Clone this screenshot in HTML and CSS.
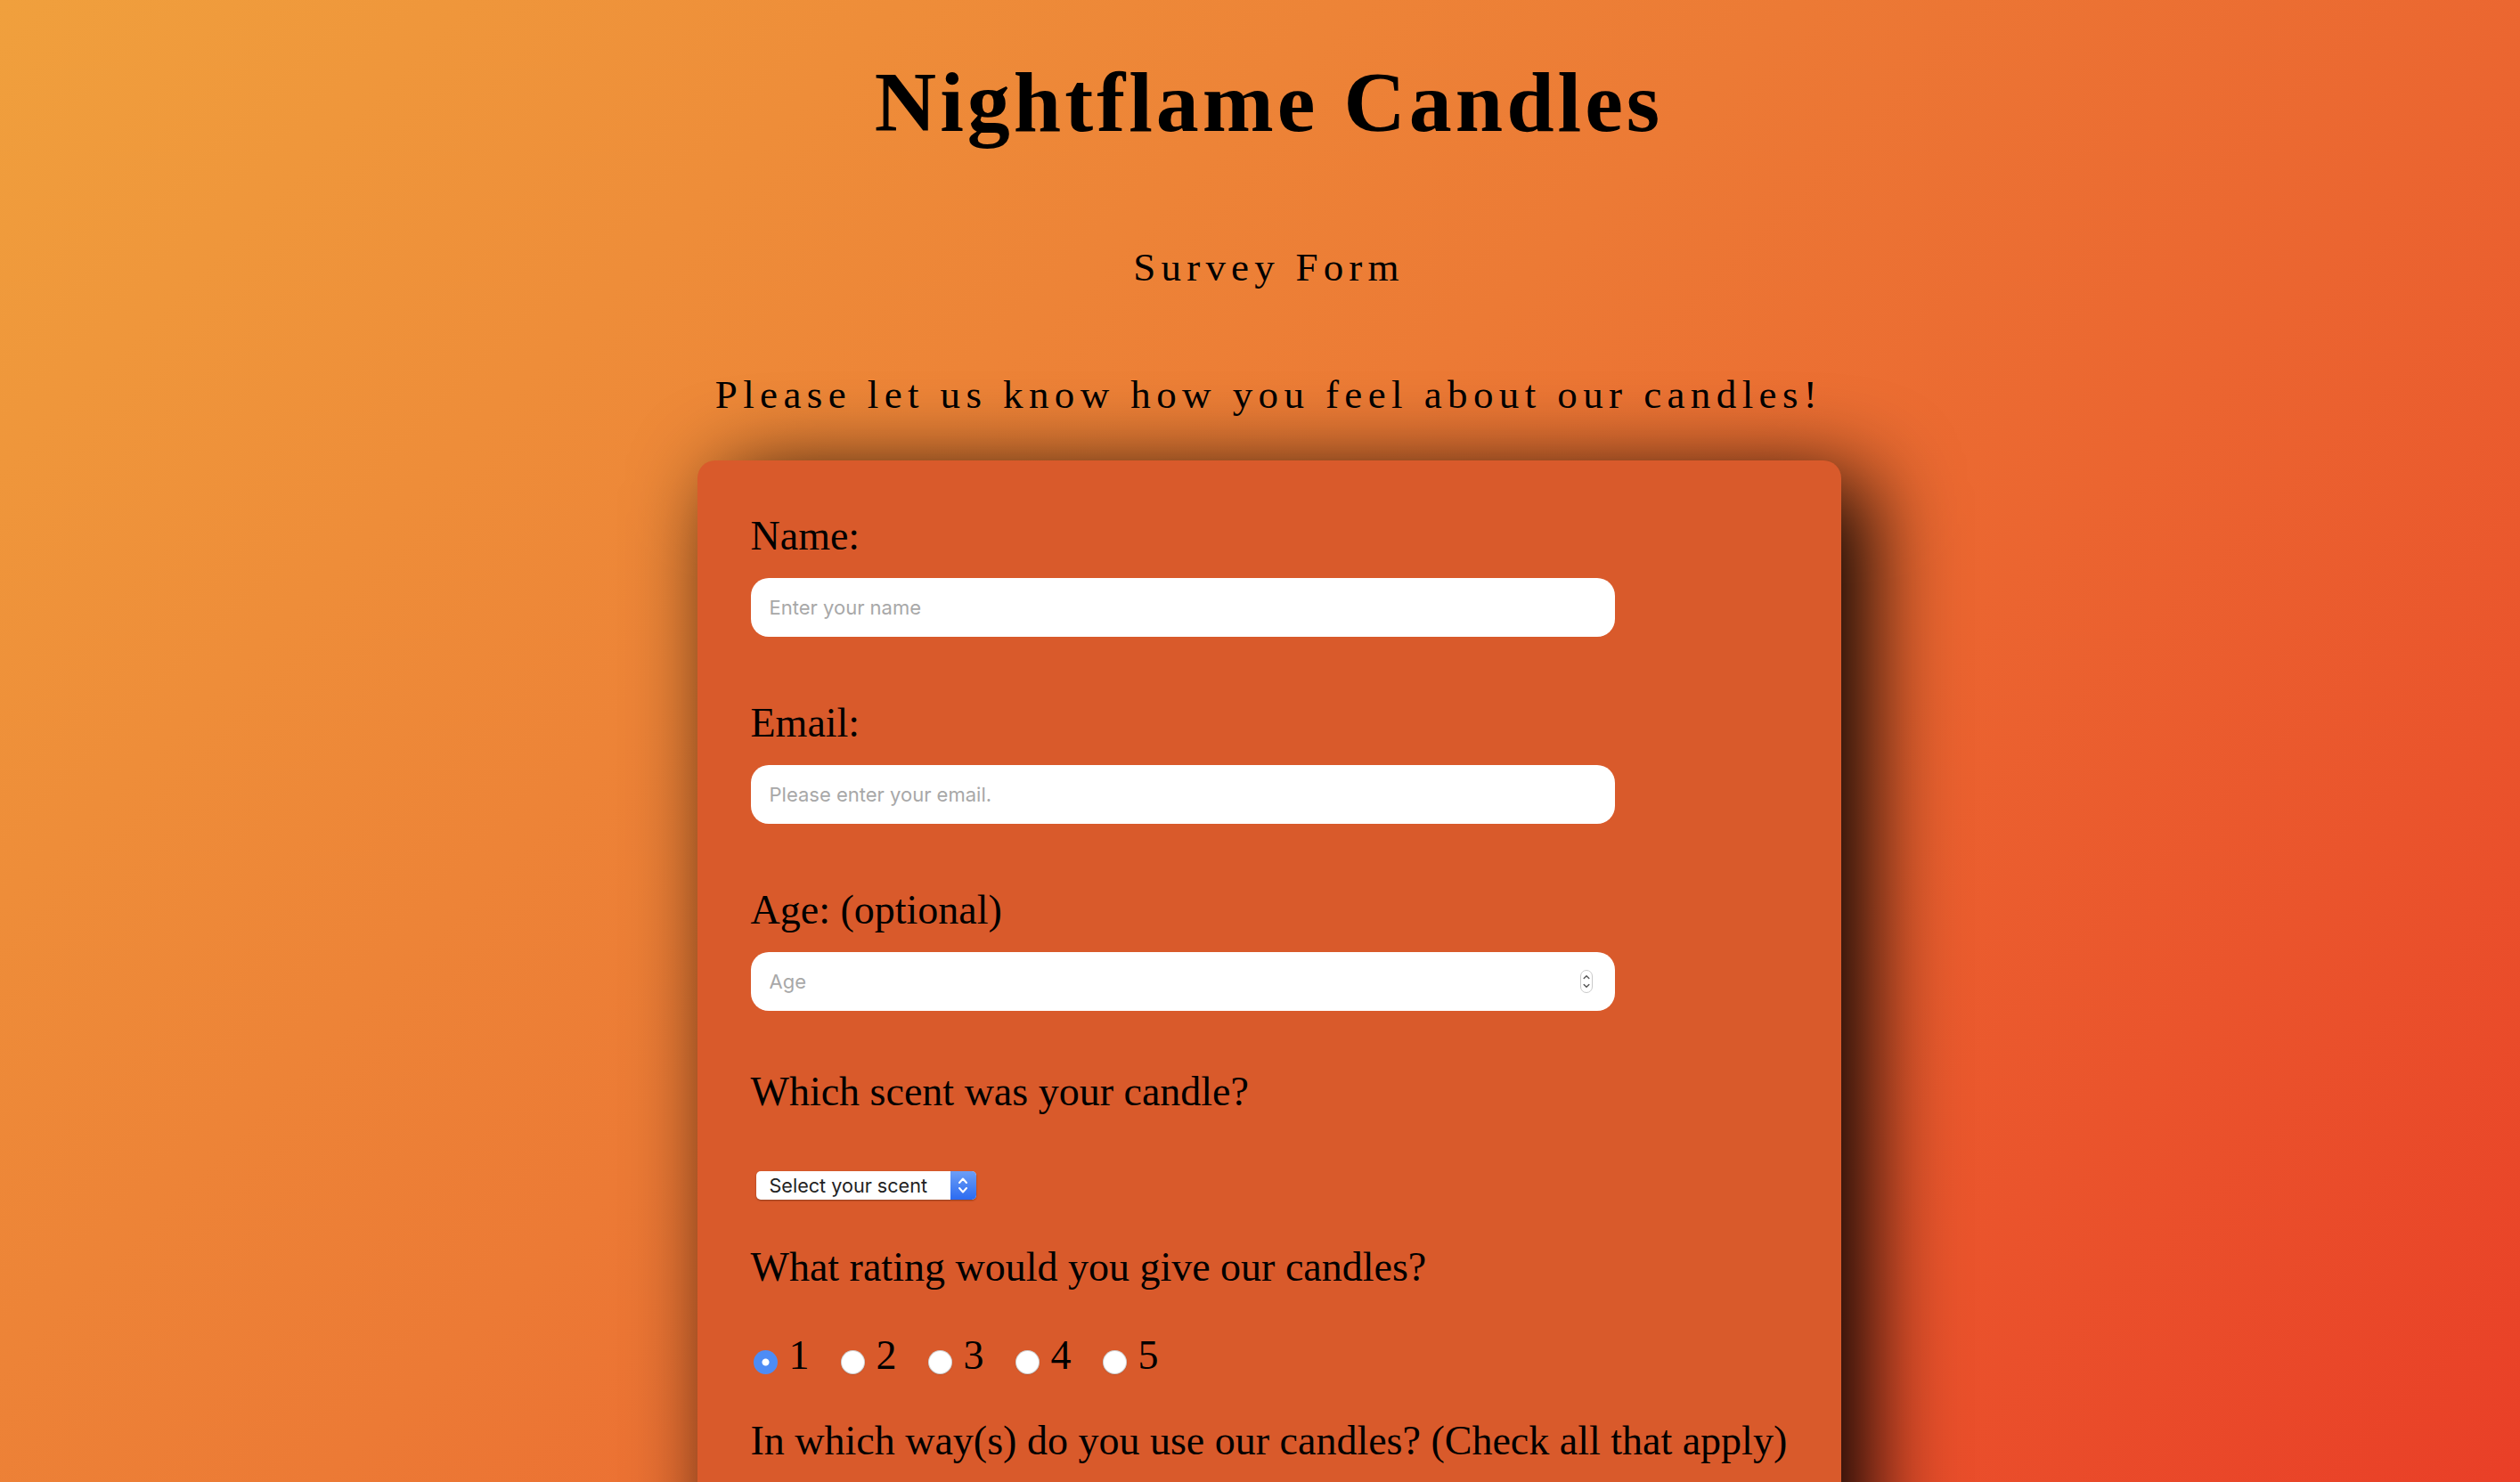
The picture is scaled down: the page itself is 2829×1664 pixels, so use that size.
FILE: index.html
```html
<!DOCTYPE html>
<html lang="en">
<head>
    <meta charset="UTF-8">
    <title>Nightflame Candles Survey</title>
    <link rel="stylesheet" href="styles.css">
</head>
<body>
    <h1 id="title" class="title">Nightflame Candles</h1>
    <p id="description" class="subtitle">Survey Form</p>
    <p class="intro">Please let us know how you feel about our candles!</p>

    <form id="survey-form" class="survey">
        <label for="name" id="name-label" class="field-label">Name:</label>
        <input type="text" id="name" class="text-input" placeholder="Enter your name" required>

        <label for="email" id="email-label" class="field-label gap-field">Email:</label>
        <input type="email" id="email" class="text-input" placeholder="Please enter your email." required>

        <label for="number" id="number-label" class="field-label gap-field">Age: (optional)</label>
        <div class="number-wrap">
            <input type="number" id="number" class="text-input" placeholder="Age" min="1" max="120">
            <svg class="spinner" width="14" height="26" viewBox="0 0 14 26">
                <rect x="0.5" y="0.5" width="13" height="25" rx="6.5" fill="#fff" stroke="#c9c9c9"/>
                <path d="M4.2 9.6 L7 6.8 L9.8 9.6" fill="none" stroke="#555" stroke-width="1.4" stroke-linecap="round" stroke-linejoin="round"/>
                <path d="M4.2 16.4 L7 19.2 L9.8 16.4" fill="none" stroke="#555" stroke-width="1.4" stroke-linecap="round" stroke-linejoin="round"/>
            </svg>
        </div>

        <p class="field-label gap-scent">Which scent was your candle?</p>
        <span class="select-box">
            <select id="dropdown" class="scent-select">
                <option>Select your scent</option>
                <option>Vanilla Ember</option>
                <option>Midnight Pine</option>
                <option>Amber Smoke</option>
            </select>
            <span class="select-arrow">
                <svg width="14" height="24" viewBox="0 0 14 24">
                    <path d="M3 9 L7 4.5 L11 9" fill="none" stroke="#fff" stroke-width="2" stroke-linecap="round" stroke-linejoin="round"/>
                    <path d="M3 15 L7 19.5 L11 15" fill="none" stroke="#fff" stroke-width="2" stroke-linecap="round" stroke-linejoin="round"/>
                </svg>
            </span>
        </span>

        <p class="field-label gap-rating">What rating would you give our candles?</p>
        <div class="rating">
            <label class="rate"><input type="radio" name="rating" value="1" class="radio" checked>1</label>
            <label class="rate"><input type="radio" name="rating" value="2" class="radio">2</label>
            <label class="rate"><input type="radio" name="rating" value="3" class="radio">3</label>
            <label class="rate"><input type="radio" name="rating" value="4" class="radio">4</label>
            <label class="rate"><input type="radio" name="rating" value="5" class="radio">5</label>
        </div>

        <p class="field-label gap-ways">In which way(s) do you use our candles? (Check all that apply)</p>
        <div class="checks">
            <label class="check"><input type="checkbox" value="relax" class="checkbox">Relaxation</label>
            <label class="check"><input type="checkbox" value="decor" class="checkbox">Home decor</label>
            <label class="check"><input type="checkbox" value="gift" class="checkbox">Gifts</label>
            <label class="check"><input type="checkbox" value="aroma" class="checkbox">Aromatherapy</label>
        </div>

        <p class="field-label gap-ways">Any comments or suggestions?</p>
        <textarea class="comments" placeholder="Enter your comments here..."></textarea>

        <button type="submit" id="submit" class="submit-btn">Submit</button>
    </form>
</body>
</html>
```

FILE: styles.css
```css
html {
    font-family: "Liberation Serif", "Times New Roman", serif;
    color: #000;
}
body {
    margin: 0;
    padding: 0 0 160px 20px;
    min-height: 100vh;
    background: linear-gradient(135deg, #f0a03d 0%, #ec7a35 45%, #e93f27 100%);
    background-attachment: fixed;
}
.title {
    margin: 57px 0 0;
    text-align: center;
    font-size: 96px;
    line-height: 116px;
    font-weight: bold;
    letter-spacing: 4px;
}
.subtitle,
.intro {
    text-align: center;
    font-size: 45px;
    line-height: 54px;
    letter-spacing: 6.2px;
}
.subtitle {
    margin: 100px 0 0;
}
.intro {
    margin: 89px 0 0;
    letter-spacing: 6.4px;
}
.survey {
    box-sizing: border-box;
    width: 1284px;
    margin: 47px auto 0;
    padding: 57.5px 60px 90px;
    background: #d95a2b;
    border-radius: 20px;
    box-shadow: 30px 20px 100px #000;
}
.field-label {
    display: block;
    margin: 0;
    font-size: 46px;
    line-height: 54px;
}
.gap-field {
    margin-top: 69.5px;
}
.gap-scent {
    margin-top: 63.5px;
}
.gap-rating {
    margin-top: 48.5px;
}
.gap-ways {
    margin-top: 42px;
}
.text-input {
    display: block;
    box-sizing: border-box;
    width: 970px;
    height: 66px;
    margin: 20.5px 0 0;
    padding: 0 21px;
    border: none;
    border-radius: 20px;
    background: #fff;
    font-family: Inter, "Noto Sans", sans-serif;
    font-size: 22px;
    color: #222;
    outline: none;
}
.text-input::placeholder {
    color: #a8a8a8;
}
.number-wrap {
    position: relative;
    width: 970px;
    padding-top: 20.5px;
}
.number-wrap .text-input {
    margin-top: 0;
    -moz-appearance: textfield;
}
.number-wrap .text-input::-webkit-inner-spin-button,
.number-wrap .text-input::-webkit-outer-spin-button {
    -webkit-appearance: none;
    margin: 0;
}
.spinner {
    position: absolute;
    right: 25px;
    top: 40.5px;
}
.select-box {
    display: inline-flex;
    height: 32px;
    margin: 62.5px 0 0 6px;
    border-radius: 5px;
    background: #fff;
    box-shadow: 0 1px 2px rgba(0, 0, 0, 0.35);
}
.scent-select {
    -webkit-appearance: none;
    appearance: none;
    width: 218px;
    height: 32px;
    padding: 0 0 0 15px;
    border: none;
    background: transparent;
    font-family: Inter, "Noto Sans", sans-serif;
    font-size: 21.6px;
    color: #222;
    outline: none;
}
.select-arrow {
    display: flex;
    align-items: center;
    justify-content: center;
    width: 29px;
    border-radius: 0 5px 5px 0;
    background: linear-gradient(#6c9ef6, #2b6bf1);
}
.rating {
    display: flex;
    gap: 32px;
    margin-top: 45px;
}
.rate {
    display: inline-flex;
    align-items: flex-start;
    font-size: 46px;
    line-height: 54px;
}
.radio {
    -webkit-appearance: none;
    appearance: none;
    width: 27px;
    height: 27px;
    margin: 21.5px 13px 0 3px;
    border-radius: 50%;
    background: #fff;
    box-shadow: inset 0 0 0 1px rgba(0, 0, 0, 0.18), 0 0.5px 1px rgba(0, 0, 0, 0.2);
}
.radio:checked {
    background: radial-gradient(circle, #fff 0 3.5px, #4d8cf5 4.5px);
    box-shadow: none;
}
.checks {
    display: flex;
    flex-direction: column;
    gap: 16px;
    margin-top: 30px;
}
.check {
    display: flex;
    align-items: center;
    font-size: 40px;
}
.checkbox {
    width: 26px;
    height: 26px;
    margin: 0 16px 0 3px;
}
.comments {
    display: block;
    box-sizing: border-box;
    width: 970px;
    height: 220px;
    margin-top: 24px;
    padding: 18px 21px;
    border: none;
    border-radius: 20px;
    font-family: Inter, "Noto Sans", sans-serif;
    font-size: 22px;
}
.submit-btn {
    display: block;
    margin-top: 50px;
    padding: 14px 60px;
    border: none;
    border-radius: 20px;
    background: #fff;
    font-family: "Liberation Serif", serif;
    font-size: 40px;
}
```
